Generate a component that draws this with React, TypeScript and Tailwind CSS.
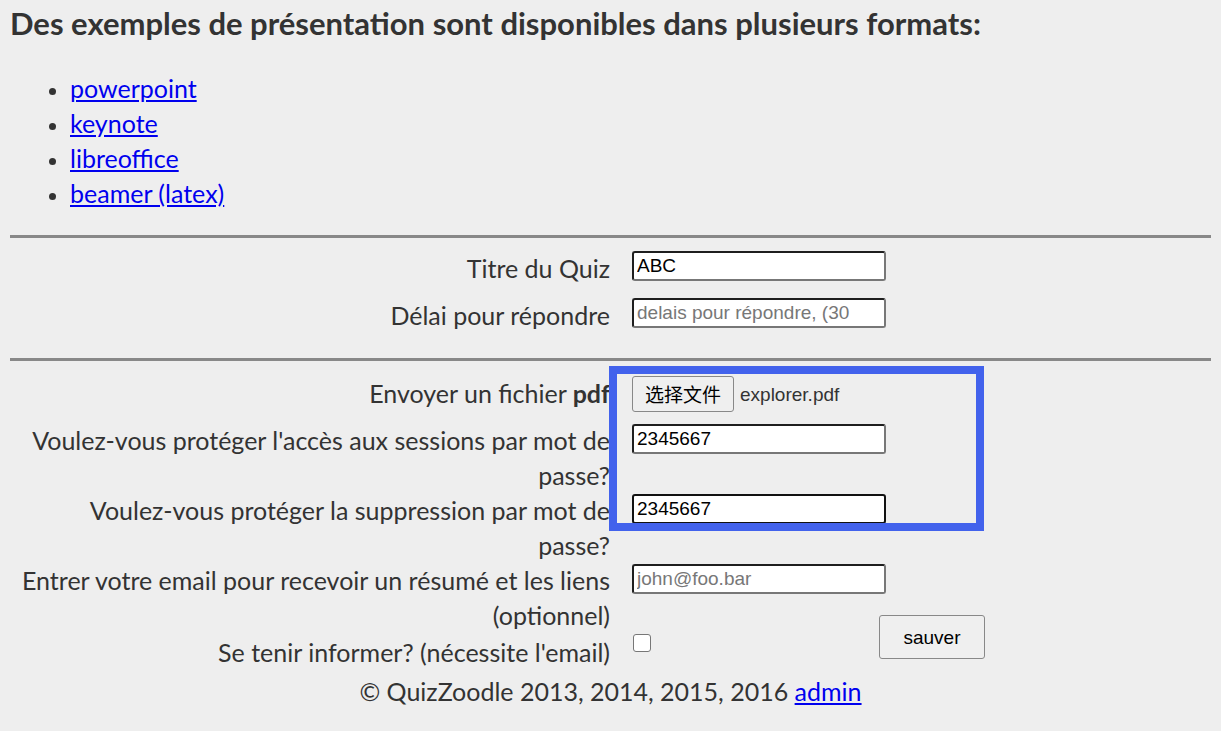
import React from 'react';

const inputCls =
  "block w-[254px] h-[30px] bg-white border-2 border-t-[#1e1e1e] border-l-[#1e1e1e] border-b-[#777] border-r-[#777] rounded-[3px] px-[3px] text-[19px] leading-[24px] text-black font-['Liberation_Sans',Arial,sans-serif] placeholder:text-[#777] outline-none";

const App = () => {
  return (
    <div className="min-h-[731px] bg-[#eeeeee] text-[#333] font-['Lato','Liberation_Sans',sans-serif] text-[25px] leading-[35px] px-[10px] relative">
      <h2 className="text-[31px] font-bold leading-[44px] pt-[1px]">Des exemples de présentation sont disponibles dans plusieurs formats:</h2>

      <ul className="list-disc pl-[60px] mt-[26px] mb-[24px] marker:text-[#333] marker:text-[22px]">
        {['powerpoint', 'keynote', 'libreoffice', 'beamer (latex)'].map((l) => (
          <li key={l}>
            <a href="#" className="text-[#0000ee] underline">{l}</a>
          </li>
        ))}
      </ul>

      <hr className="border-0 h-[3px] bg-[#888]" />

      {/* quiz settings */}
      <div className="grid grid-cols-[600px_269px_auto] items-start pt-[12px] pb-[14px]">
        <div className="text-right h-[47px] pt-[1px]">Titre du Quiz</div>
        <div className="pl-[22px] pt-[1px]"><input className={inputCls} defaultValue="ABC" /></div>
        <div />
        <div className="text-right h-[47px] pt-[1px]">Délai pour répondre</div>
        <div className="pl-[22px] pt-[1px]"><input className={inputCls} placeholder="delais pour répondre, (30" /></div>
        <div />
      </div>

      <hr className="border-0 h-[3px] bg-[#888]" />

      <div className="grid grid-cols-[600px_269px_auto] items-start pt-[13px]">
        <div className="text-right h-[49px] pt-[2px]">Envoyer un fichier <b>pdf</b></div>
        <div className="pl-[22px] pt-[2px] flex items-center gap-[6px] font-['Liberation_Sans',Arial,sans-serif] text-[19px]">
          <button className="h-[36px] px-[12px] bg-[#efefef] border border-[#888] rounded-[3px] text-black font-['Noto_Sans_CJK_SC',sans-serif] text-[19px] leading-[24px]">选择文件</button>
          <span className="text-[#333]">explorer.pdf</span>
        </div>
        <div />

        <div className="text-right h-[70px]">Voulez-vous protéger l'accès aux sessions par mot de<br />passe?</div>
        <div className="pl-[22px] pt-[1px]"><input className={inputCls} defaultValue="2345667" /></div>
        <div />

        <div className="text-right h-[70px]">Voulez-vous protéger la suppression par mot de<br />passe?</div>
        <div className="pl-[22px] pt-[1px]"><input className={`${inputCls} !border-[#111]`} defaultValue="2345667" /></div>
        <div />

        <div className="text-right h-[70px]">Entrer votre email pour recevoir un résumé et les liens<br />(optionnel)</div>
        <div className="pl-[22px] pt-[1px]"><input className={inputCls} placeholder="john@foo.bar" /></div>
        <div className="row-span-2 pt-[52px]">
          <button className="w-[106px] h-[44px] bg-[#efefef] border border-[#888] rounded-[3px] text-black font-['Liberation_Sans',Arial,sans-serif] text-[19px]">sauver</button>
        </div>

        <div className="text-right h-[36px] pt-[2px]">Se tenir informer? (nécessite l'email)</div>
        <div className="pl-[23px] pt-[1px]">
          <div className="w-[18px] h-[18px] bg-white border border-[#777] rounded-[3px]" />
        </div>
      </div>

      <p className="text-center mt-[5px]">
        © QuizZoodle 2013, 2014, 2015, 2016 <a href="#" className="text-[#0000ee] underline">admin</a>
      </p>

      <div className="absolute left-[609px] top-[366px] w-[375px] h-[165px] border-[8px] border-[#4262ec] pointer-events-none" />
    </div>
  );
};

export default App;
